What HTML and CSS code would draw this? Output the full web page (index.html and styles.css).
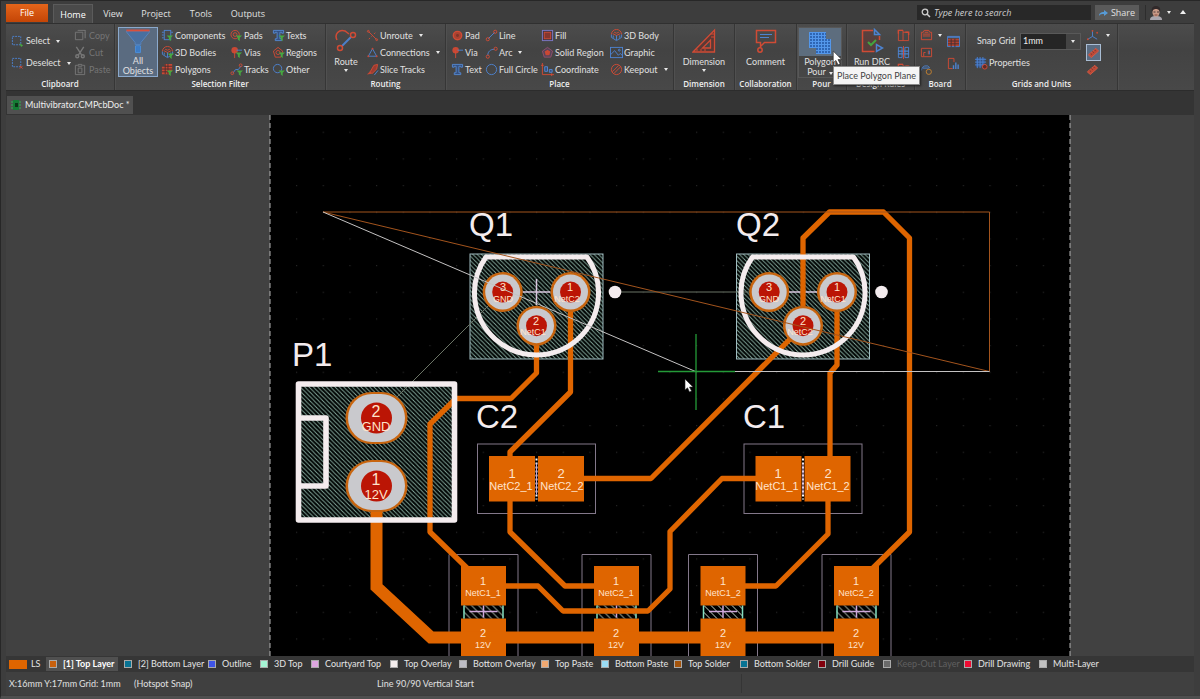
FILE: index.html
```html
<!DOCTYPE html>
<html lang="en">
<head>
<meta charset="utf-8">
<title>Multivibrator.CMPcbDoc</title>
<link rel="stylesheet" href="styles.css">
</head>
<body>
<svg class="sprite" aria-hidden="true">
  <symbol id="select" viewBox="0 0 14 14"><rect x="1.500" y="1.500" width="9" height="9" class="b" stroke-dasharray="2 1"/><path d="M9 9l4 2-2 2z" class="gf"/></symbol>
  <symbol id="deselect" viewBox="0 0 14 14"><rect x="1.500" y="1.500" width="9" height="9" class="b" stroke-dasharray="2 1"/><path d="M9.500 9.500l3 3m0-3l-3 3" class="r"/></symbol>
  <symbol id="copy" viewBox="0 0 14 14"><path d="M1.500 3.500h8v8h-8zM4 1.500h8v8" class="k"/><path d="M12 1v9" class="k" stroke-dasharray="1 1"/></symbol>
  <symbol id="cut" viewBox="0 0 14 14"><path d="M2.500 1l6 9M10.500 1l-6 9" class="k2"/><circle cx="3.500" cy="11" r="1.600" class="k2"/><circle cx="9.500" cy="11" r="1.600" class="k2"/></symbol>
  <symbol id="paste" viewBox="0 0 14 14"><path d="M4 2.500H1.500v10h10v-10H9M4.500 1.500h4v2h-4zM4.500 5.500h4v5h-4z" class="k"/></symbol>
  <symbol id="funnel" viewBox="0 0 7 7"><path d="M0 1h7L4.500 3.500V7L2.500 5.500v-2z" class="gf"/></symbol>
  <symbol id="comp" viewBox="0 0 14 14"><rect x="3.500" y="1.500" width="7" height="10" class="b"/><path d="M1 3.500h2M1 6.500h2M1 9.500h2M11 3.500h2" class="b"/><use href="#funnel" x="6" y="6" width="7" height="7"/></symbol>
  <symbol id="body" viewBox="0 0 14 14"><path d="M1.500 6a5.500 5.500 0 0 1 11 0M3 5l4 2 4-2M4.500 3.500L7 4.500l2.500-1" class="r"/><path d="M1.500 6v3L7 12.500 12.500 9V6M7 7v5M3.500 7v2.500M10.500 7v2.500" class="b"/></symbol>
  <symbol id="bodyf" viewBox="0 0 14 14"><use href="#body"/><use href="#funnel" x="7" y="7" width="7" height="7"/></symbol>
  <symbol id="poly" viewBox="0 0 14 14"><path d="M4 1h8v8H9v3H1V4h3z" class="rf"/><path d="M1 6.500h11M1 9.500h11M4.500 1v11M7.500 1v11M4 3.500h8" class="dk"/><use href="#funnel" x="6" y="7" width="7" height="7"/></symbol>
  <symbol id="pad" viewBox="0 0 14 14"><circle cx="7" cy="7" r="4.500" fill="#a94231" stroke="#d04b35" stroke-width="1.500"/><circle cx="7" cy="7" r="1.600" fill="#7f3429"/></symbol>
  <symbol id="padf" viewBox="0 0 14 14"><circle cx="5.500" cy="6" r="4.500" class="r"/><circle cx="5.500" cy="6" r="2" class="r"/><use href="#funnel" x="6" y="6" width="7" height="7"/></symbol>
  <symbol id="via" viewBox="0 0 14 14"><circle cx="5" cy="4.500" r="3.500" class="rf"/><path d="M5 5v8" class="r"/><path d="M7 4.500h6" class="b"/></symbol>
  <symbol id="viaf" viewBox="0 0 14 14"><use href="#via"/><use href="#funnel" x="6" y="6" width="7" height="7"/></symbol>
  <symbol id="text" viewBox="0 0 14 14"><path d="M1.500 1.500h11v3h-2v-1h-2v7h2v2h-7v-2h2v-7h-2v1h-2z" fill="#355181" stroke="#5488d2"/></symbol>
  <symbol id="textf" viewBox="0 0 14 14"><use href="#text"/><use href="#funnel" x="7" y="6" width="7" height="7"/></symbol>
  <symbol id="region" viewBox="0 0 14 14"><path d="M7 1.500l5.500 4-2 6.500h-7l-2-6.500z" fill="#55435a" stroke="#94506a"/><path d="M7 4l3 2-1 4H5L4 6z" class="rf"/></symbol>
  <symbol id="regionf" viewBox="0 0 14 14"><path d="M6.500 1.500l5 4-2 6.500h-6l-2-6.500z" class="r"/><circle cx="6.500" cy="7" r="2.200" class="r"/><use href="#funnel" x="7" y="6" width="7" height="7"/></symbol>
  <symbol id="line" viewBox="0 0 14 14"><path d="M3.500 10.500l7-7" class="b"/><circle cx="3" cy="11" r="1.700" class="r"/><circle cx="11" cy="3" r="1.700" class="r"/></symbol>
  <symbol id="trackf" viewBox="0 0 14 14"><path d="M3 11l3-4h3l3-4" class="b"/><circle cx="2.500" cy="11" r="1.500" class="r"/><circle cx="11.500" cy="2.500" r="1.500" class="r"/><use href="#funnel" x="7" y="7" width="7" height="7"/></symbol>
  <symbol id="circle" viewBox="0 0 14 14"><circle cx="7" cy="7" r="5.500" class="b"/></symbol>
  <symbol id="circlef" viewBox="0 0 14 14"><circle cx="6" cy="6" r="4.500" class="b"/><use href="#funnel" x="7" y="7" width="7" height="7"/></symbol>
  <symbol id="unroute" viewBox="0 0 14 14"><path d="M3 3l8 8" class="r"/><path d="M3 11l8-8" class="r" stroke-dasharray="2 2"/><circle cx="2.500" cy="2.500" r="1" class="r"/><circle cx="11.500" cy="11.500" r="1" class="r"/></symbol>
  <symbol id="conn" viewBox="0 0 14 14"><path d="M7 3l4.500 8h-9z" class="b"/><circle cx="7" cy="3" r="1" class="rf"/><circle cx="2.500" cy="11" r="1" class="rf"/><circle cx="11.500" cy="11" r="1" class="rf"/></symbol>
  <symbol id="slice" viewBox="0 0 14 14"><path d="M1 12.500l5-1L4.500 9z" class="rf"/><path d="M4.500 9.500l4-7 4-1-1 5-5 5z" fill="#9d3b30" stroke="#d04b35"/><path d="M9 13l4-5" class="b"/></symbol>
  <symbol id="arc" viewBox="0 0 14 14"><path d="M3 10c0-4 3-6.500 7-6.500" class="b"/><circle cx="3" cy="11.500" r="1.700" class="r"/><circle cx="11.500" cy="3" r="1.700" class="r"/></symbol>
  <symbol id="fill" viewBox="0 0 14 14"><rect x="1.500" y="1.500" width="11" height="11" fill="#3b3546" stroke="#7d78c6"/><rect x="3.500" y="3.500" width="7" height="7" fill="#85362f" stroke="#d04b35"/></symbol>
  <symbol id="coord" viewBox="0 0 14 14"><path d="M1.500 0v12.500H14M0 2.500h3M11.500 11v3" class="r"/><path d="M4 4h3v5H4zM9 7h3v3H9z" fill="#355181" stroke="#5488d2"/></symbol>
  <symbol id="graphic" viewBox="0 0 14 14"><rect x=".5" y="1.500" width="13" height="11" class="b"/><path d="M1 9l4-4 4 5 2-2 3 3" class="b"/><circle cx="10" cy="4.500" r="1" class="b"/></symbol>
  <symbol id="keep" viewBox="0 0 14 14"><circle cx="7" cy="7" r="5.500" class="r"/><path d="M2.500 9.500l7-7M4 11.500l7.500-7.500" class="r"/></symbol>
  <symbol id="rule1" viewBox="0 0 14 14"><path d="M1.500 1.500h5v11h-5zM6.500 3.500h6v9h-6" class="r"/><path d="M1.500 5v-3.500h5M9 3.500h3.500v3" class="r2"/></symbol>
  <symbol id="rule2" viewBox="0 0 14 14"><path d="M1.500 1.500h4v11h-4zM8.500 1.500h4v11h-4z" class="b"/><path d="M1 5.500h12M1 8.500h12" class="b2"/><path d="M7 0v14" class="r"/></symbol>
  <symbol id="board1" viewBox="0 0 14 14"><path d="M1.500 11.500v-8h2l1-2h5l1 2h2v8z" class="r"/><path d="M3 5.500h8M3 7.500h8M5 3.500h4" class="r"/></symbol>
  <symbol id="board2" viewBox="0 0 14 14"><path d="M1.500 2.500h11v9h-11zM4 11V7h2M9 5v4" class="r"/><path d="M10 5v4" class="b"/></symbol>
  <symbol id="board3" viewBox="0 0 14 14"><path d="M1.500 8a5 5 0 0 1 9-3M3 5.500h7" class="b"/><circle cx="9.500" cy="9.500" r="2.800" fill="none" stroke="#c28130"/></symbol>
  <symbol id="table" viewBox="0 0 14 14"><path d="M1 4h12v8H1z" fill="#b04331"/><path d="M.5 1.500h13v11H.5zM1 2.500h12" class="b"/><path d="M1 6.500h12M1 9.500h12M4.500 4v9M8.500 4v9" class="dk"/></symbol>
  <symbol id="chart" viewBox="0 0 14 14"><path d="M6 12.500H1.500v-11h6v4" class="r"/><path d="M7 13V9M9.500 13V6M12 13V8" class="b2"/></symbol>
  <symbol id="gridp" viewBox="0 0 14 14"><path d="M1 1h10v10H1z" fill="#355181"/><path d="M0 2.500h12M0 5.500h12M0 8.500h12M2.500 0v12M5.500 0v12M8.500 0v12" class="b"/><circle cx="10.500" cy="10.500" r="2.500" fill="#5d2b26" stroke="#d04b35"/></symbol>
  <symbol id="axes" viewBox="0 0 14 14"><path d="M7 2v6l-5 3M7 8l5 3" class="b"/><circle cx="7" cy="2" r="1" class="rf"/><circle cx="2" cy="11" r="1" class="rf"/><circle cx="12" cy="4" r="1" class="rf"/></symbol>
  <symbol id="ruler" viewBox="0 0 14 14"><path d="M1.500 9.500l8-7 3 3-8 7z" fill="#bd4836" stroke="#d65b43"/><path d="M4 8l1 1M6 6l1 1M8 4l1 1" class="dk"/></symbol>
  <symbol id="cursor" viewBox="0 0 10 15"><path d="M1 1v11l2.500-2.200L5.500 14l2-1-2-4H9z" fill="#fff" stroke="#222" stroke-width=".6"/></symbol>
</svg>

<div class="app">
  <header class="titlebar">
    <nav class="tabs" aria-label="Ribbon tabs">
      <button class="file">File</button>
      <button class="tab tab-on">Home</button>
      <button class="tab tab-view">View</button>
      <button class="tab tab-project">Project</button>
      <button class="tab tab-tools">Tools</button>
      <button class="tab tab-outputs">Outputs</button>
    </nav>
    <label class="search">
      <svg viewBox="0 0 10 10" width="10" height="10" aria-hidden="true"><circle cx="4" cy="4" r="2.800" fill="none" stroke="#ccc" stroke-width="1.300"/><path d="M6 6l3 3" stroke="#ccc" stroke-width="1.500"/></svg>
      <input type="search" placeholder="Type here to search" aria-label="Search">
    </label>
    <button class="share"><svg viewBox="0 0 9 8" width="9" height="8" aria-hidden="true"><path d="M0 7c0-3 2-4 5-4V1l4 3-4 3V5C3 5 1 5 0 7z" fill="#579bd6"/></svg>Share</button>
    <button class="account" aria-label="Account">
      <svg viewBox="0 0 12 14" width="12" height="14" aria-hidden="true"><path d="M0 14c0-3 2-4 6-4s6 1 6 4z" fill="#a9a6ae"/><ellipse cx="6" cy="6" rx="3.600" ry="4.800" fill="#c99a87"/><path d="M2 6C1 2 3 0 6 0s5 2 4 6C9 3 7 3 6 3S3 3 2 6z" fill="#30292a"/><path d="M3.500 6h2M7 6h2" stroke="#4c3b3b"/><path d="M4.500 9h3" stroke="#86483f"/></svg>
      <span class="caret"></span>
    </button>
    <button class="collapse" aria-label="Collapse ribbon"><span class="caret-up"></span></button>
  </header>

  <div class="ribbon">
    <section class="group g-clip">
      <div class="content">
        <div class="pair">
          <button class="item"><svg><use href="#select"/></svg>Select<span class="caret"></span></button>
          <button class="item"><svg><use href="#deselect"/></svg>Deselect<span class="caret"></span></button>
        </div>
        <div class="rows">
          <button class="item" disabled><svg><use href="#copy"/></svg>Copy</button>
          <button class="item" disabled><svg><use href="#cut"/></svg>Cut</button>
          <button class="item" disabled><svg><use href="#paste"/></svg>Paste</button>
        </div>
      </div>
      <h2>Clipboard</h2>
    </section>
    <section class="group g-filter">
      <div class="content">
        <button class="big all">
          <svg viewBox="0 0 26 27" width="26" height="27"><path d="M1 2h24v1L16 14v2h-6v-2L1 3z" fill="#496f9f" stroke="#5583bd"/><path d="M1 1.500h24" stroke="#d7503c" stroke-width="2"/><path d="M10.500 17.500h5v7h-5zM12 18v6M14 18v6" fill="#2e66ae" stroke="#4c91dd"/></svg>
          <span>All<br>Objects</span>
        </button>
        <div class="rows filter-cols">
          <button class="item"><svg><use href="#comp"/></svg>Components</button>
          <button class="item"><svg><use href="#bodyf"/></svg>3D Bodies</button>
          <button class="item"><svg><use href="#poly"/></svg>Polygons</button>
          <button class="item"><svg><use href="#padf"/></svg>Pads</button>
          <button class="item"><svg><use href="#viaf"/></svg>Vias</button>
          <button class="item"><svg><use href="#trackf"/></svg>Tracks</button>
          <button class="item"><svg><use href="#textf"/></svg>Texts</button>
          <button class="item"><svg><use href="#regionf"/></svg>Regions</button>
          <button class="item"><svg><use href="#circlef"/></svg>Other</button>
        </div>
      </div>
      <h2>Selection Filter</h2>
    </section>
    <section class="group g-route">
      <div class="content">
        <button class="big route">
          <svg viewBox="0 0 24 25" width="24" height="25"><path d="M8 18l9-9" stroke="#4c7fca" stroke-width="2"/><path d="M3 12C0 6 5 1 11 3l4 3" class="r2"/><circle cx="6" cy="20" r="2.500" class="r2"/><circle cx="19" cy="7" r="2.500" class="r2"/></svg>
          <span>Route</span><span class="caret"></span>
        </button>
        <div class="rows">
          <button class="item"><svg><use href="#unroute"/></svg>Unroute<span class="caret"></span></button>
          <button class="item"><svg><use href="#conn"/></svg>Connections<span class="caret"></span></button>
          <button class="item"><svg><use href="#slice"/></svg>Slice Tracks</button>
        </div>
      </div>
      <h2>Routing</h2>
    </section>
    <section class="group g-place">
      <div class="content">
        <div class="rows place-cols">
          <button class="item"><svg><use href="#pad"/></svg>Pad</button>
          <button class="item"><svg><use href="#via"/></svg>Via</button>
          <button class="item"><svg><use href="#text"/></svg>Text</button>
          <button class="item"><svg><use href="#line"/></svg>Line</button>
          <button class="item"><svg><use href="#arc"/></svg>Arc<span class="caret"></span></button>
          <button class="item"><svg><use href="#circle"/></svg>Full Circle</button>
          <button class="item"><svg><use href="#fill"/></svg>Fill</button>
          <button class="item"><svg><use href="#region"/></svg>Solid Region</button>
          <button class="item"><svg><use href="#coord"/></svg>Coordinate</button>
          <button class="item"><svg><use href="#body"/></svg>3D Body</button>
          <button class="item"><svg><use href="#graphic"/></svg>Graphic</button>
          <button class="item"><svg><use href="#keep"/></svg>Keepout<span class="caret"></span></button>
        </div>
      </div>
      <h2>Place</h2>
    </section>
    <section class="group g-dim">
      <div class="content">
        <button class="big">
          <svg viewBox="0 0 24 25" width="24" height="25"><path d="M22.500 2v22H1zM18.500 12v8h-8z" fill="#5b3935" stroke="#d04b35" stroke-width="1.300" fill-rule="evenodd"/><path d="M19 6h3M19 9h3M5 21v2M9 21v2M13 21v2" class="r"/></svg>
          <span>Dimension</span><span class="caret"></span>
        </button>
      </div>
      <h2>Dimension</h2>
    </section>
    <section class="group g-collab">
      <div class="content">
        <button class="big">
          <svg viewBox="0 0 24 25" width="24" height="25"><path d="M2.500 2.500h19v12h-11l-4 4v-4h-4z" class="r2"/><path d="M6 6.500h12M6 9.500h9" class="b"/><circle cx="6" cy="22" r="2.200" class="r2"/></svg>
          <span>Comment</span>
        </button>
      </div>
      <h2>Collaboration</h2>
    </section>
    <section class="group g-pour">
      <div class="content">
        <button class="big pour">
          <span class="pour-icon"><svg viewBox="0 0 24 25" width="24" height="25"><path d="M1 2h17v7h5v15H8v-7H1z" fill="#2f66b4"/><path d="M1 2.500h17M1 5.500h17M1 8.500h17M1 11.500h22M1 14.500h22M1 17.500h22M8 20.500h15M8 23.500h15M1.500 2v16M4.500 2v16M7.500 2v16M10.500 2v22M13.500 2v22M16.500 2v22M19.500 9v15M22.500 9v15" stroke="#5397eb" stroke-width="1" fill="none"/></svg></span>
          <span>Polygon<br>Pour <i class="caret"></i></span>
        </button>
        <svg class="pointer" width="11" height="16"><use href="#cursor"/></svg>
        <div class="tooltip" role="tooltip">Place Polygon Plane</div>
      </div>
      <h2>Pour</h2>
    </section>
    <section class="group g-rules">
      <div class="content">
        <button class="big drc">
          <svg viewBox="0 0 24 25" width="24" height="25"><path d="M3 3h10v5h6v15H3z" fill="#693833" opacity=".5"/><path d="M13 2.500H2.500v21h12M19.500 12V8" class="r2"/><path d="M14.500 1.500v5h5zM16.500 16.500v7l6-3.500z" class="b2"/><path d="M8 14l3 3 5-5" fill="none" stroke="#44a43e" stroke-width="2"/></svg>
          <span>Run DRC</span>
        </button>
        <div class="rows">
          <button class="item" aria-label="Rules"><svg><use href="#rule1"/></svg></button>
          <button class="item" aria-label="Constraints"><svg><use href="#rule2"/></svg></button>
          <button class="item" aria-label="Rule wizard"><svg><use href="#rule1"/></svg></button>
        </div>
      </div>
      <h2>Design Rules</h2>
    </section>
    <section class="group g-board">
      <div class="content">
        <div class="rows">
          <button class="item" aria-label="Board shape"><svg><use href="#board1"/></svg><span class="caret"></span></button>
          <button class="item" aria-label="Layer stack"><svg><use href="#board2"/></svg></button>
          <button class="item" aria-label="Board settings"><svg><use href="#board3"/></svg></button>
        </div>
        <div class="pair">
          <button class="item" aria-label="Drill table"><svg><use href="#table"/></svg></button>
          <button class="item" aria-label="Report"><svg><use href="#chart"/></svg></button>
        </div>
      </div>
      <h2>Board</h2>
    </section>
    <section class="group g-grids">
      <div class="content">
        <div class="pair">
          <div class="snap"><label for="snap">Snap Grid</label><span class="combo"><select id="snap"><option>1mm</option></select><span class="caret"></span></span></div>
          <button class="item"><svg><use href="#gridp"/></svg>Properties</button>
        </div>
        <div class="rows">
          <button class="item" aria-label="Origin"><svg><use href="#axes"/></svg><span class="caret"></span></button>
          <button class="item unit-on" aria-label="Metric"><svg><use href="#ruler"/></svg></button>
          <button class="item" aria-label="Imperial"><svg><use href="#ruler"/></svg></button>
        </div>
      </div>
      <h2>Grids and Units</h2>
    </section>
  </div>

  <div class="docbar">
    <button class="doc"><svg viewBox="0 0 10 10" width="10" height="10" aria-hidden="true"><path d="M2 0h6v10H2z" fill="#167b35"/><path d="M0 2h2M0 5h2M0 8h2M8 2h2M8 5h2M8 8h2" stroke="#2db653"/><path d="M4 3h3v4H4z" fill="#0b3518"/></svg>Multivibrator.CMPcbDoc *</button>
  </div>

  <main class="canvas">
    <svg class="board" viewBox="6 115 1188 541" preserveAspectRatio="xMinYMin slice" role="img" aria-label="Circuit board layout">
      <defs>
        <pattern id="dots" x="296" y="185" width="26.670" height="26.670" patternUnits="userSpaceOnUse"><rect width="1.200" height="1.200" fill="#242424"/></pattern>
        <pattern id="hatch" width="4.330" height="4.330" patternUnits="userSpaceOnUse"><rect width="4.330" height="4.330" fill="#010504"/><path d="M-1-1l6.500 6.500M-1 3.330l2 2M3.330-1l2 2" stroke="#86aa9d" stroke-width=".9"/></pattern>
        <pattern id="hatch2" width="7" height="7" patternUnits="userSpaceOnUse"><path d="M-1-1l9 9M-1 6l2 2M6-1l2 2" stroke="#c8d8c8" stroke-width="1"/></pattern>
        <g id="q">
          <rect x="-66.500" y="-38" width="133" height="105" fill="url(#hatch)" stroke="#9fbcc0"/>
          <path d="M-14 0h28M0-13v26" stroke="#d9c8e0" stroke-width="1.500"/>
        </g>
        <path id="can" d="M-50.500-35h101A62 62 0 1 1-50.500-35z" fill="none" stroke="#f4ecee" stroke-width="5" stroke-linejoin="round"/>
        <g id="rpad"><circle r="20" fill="#c8650f"/><circle r="17.500" fill="#c9c9cd"/><circle r="10.500" fill="#bb1505"/></g>
        <g id="opad"><rect x="-31" y="-26" width="62" height="52" rx="26" fill="#c8650f"/><rect x="-28.500" y="-24" width="57" height="48" rx="24" fill="#c9c9cd"/><circle r="15.500" fill="#bb1505"/></g>
        <g id="cap"><rect x="-59" y="-34.500" width="118" height="69.500" fill="none" stroke="#83788a"/><path d="M-47.500-22.500h46v45.500h-46zM1.500-22.500h46v45.500h-46z" fill="#df6500"/><path d="M0-20v41" stroke="#fff" stroke-width="2" stroke-dasharray="2 2"/><path d="M0-15v31" stroke="#caa3cf"/></g>
        <g id="res"><path d="M-34.500 102V0h69v102" fill="none" stroke="#83788a"/><path d="M-22.500 11.500h45v39.500h-45zM-22.500 64h45v40h-45z" fill="#df6500"/><rect x="-20" y="51" width="40" height="13" fill="url(#hatch2)"/><path d="M-19.500 51v13M19.500 51v13" stroke="#83dec0" stroke-width="1.500"/><path d="M-14 57h28M0 51v12" stroke="#cfa8dc" stroke-width="1.500"/></g>
      </defs>
      <rect x="270" y="115" width="800" height="541" fill="#000"/>
      <rect x="272" y="125" width="796" height="531" fill="url(#dots)"/>
      <path d="M270 115v541M1070 115v541" stroke="#b4b4b4" stroke-dasharray="5 3"/>
      <use href="#q" x="536.500" y="292"/><use href="#q" x="803" y="292"/>
      <rect x="298" y="384" width="156" height="136" fill="url(#hatch)"/>
      <use href="#cap" x="536.500" y="478.500"/><use href="#cap" x="803" y="478.500"/>
      <use href="#res" x="483.500" y="554.500"/><use href="#res" x="616.500" y="554.500"/><use href="#res" x="723" y="554.500"/><use href="#res" x="856.500" y="554.500"/>
      <path d="M376 418L502 292M615 292h154" stroke="#6b7466" fill="none"/>
      <g fill="none" stroke="#df6500" stroke-width="5.300" stroke-linejoin="round">
        <path d="M536.500 326v47L511 398.500h-55L430 424v108l38 37"/>
        <path d="M570.500 292v100L510 452v6M510 500v32l55 54h31"/>
        <path d="M583 478.500h68L803 326v-88l26.500-26h54l26 26v294L873 568"/>
        <path d="M837 292v73l-7 8v85M828 500v34l-52 52h-31"/>
        <path d="M757 478.500h-35l-52 53V589l-22 22h-85l-25-25h-33"/>
        <path d="M376.500 505v82l54.500 50.500h404" stroke-width="12" stroke-linejoin="miter"/>
      </g>
      <g fill="none" stroke="#f4ecee" stroke-width="5.600" stroke-linejoin="round"><rect x="298.500" y="384" width="156" height="136"/><path d="M301 418h25v68h-25"/></g>
      <use href="#can" x="536.500" y="292"/><use href="#can" x="803" y="292"/>
      <use href="#rpad" x="502.700" y="292"/><use href="#rpad" x="570.500" y="292"/><use href="#rpad" x="536.500" y="325.700"/>
      <use href="#rpad" x="769.200" y="292"/><use href="#rpad" x="837" y="292"/><use href="#rpad" x="803" y="325.700"/>
      <use href="#opad" x="376.500" y="418"/><use href="#opad" x="376.500" y="486"/>
      <circle cx="615" cy="292" r="6.300" fill="#f4ecee"/><circle cx="881.500" cy="292" r="6.300" fill="#f4ecee"/>
      <path d="M323 212h666.500v159.500z" fill="none" stroke="#a3541d"/>
      <path d="M323 212l372.500 159.500h294" fill="none" stroke="#c4c2c2"/>
      <path d="M658 371.500h77M696 334v76" stroke="#249a38" stroke-width="1.300"/>
      <g class="designator"><text x="469" y="236">Q1</text><text x="736" y="236">Q2</text><text x="292" y="366">P1</text><text x="476" y="428">C2</text><text x="743" y="428">C1</text></g>
      <g class="net name-s"><text x="503" y="302">GND</text><text x="567" y="302">NetC2</text><text x="533" y="335">NetC1</text><text x="769" y="302">GND</text><text x="833" y="302">NetC1</text><text x="800" y="335">NetC2</text></g>
      <g class="net num-s"><text x="503" y="291">3</text><text x="570" y="291">1</text><text x="536" y="325">2</text><text x="769" y="291">3</text><text x="837" y="291">1</text><text x="803" y="325">2</text></g>
      <g class="net num-l"><text x="376" y="417">2</text><text x="376" y="485">1</text></g>
      <g class="net name-l"><text x="376" y="431">GND</text><text x="376" y="499">12V</text></g>
      <g class="net num-m"><text x="512" y="478">1</text><text x="561" y="478">2</text><text x="778" y="478">1</text><text x="828" y="478">2</text></g>
      <g class="net name-m"><text x="511" y="490">NetC2_1</text><text x="562" y="490">NetC2_2</text><text x="777" y="490">NetC1_1</text><text x="828" y="490">NetC1_2</text></g>
      <g class="net num-s"><text x="483" y="585">1</text><text x="483" y="637">2</text><text x="616" y="585">1</text><text x="616" y="637">2</text><text x="723" y="585">1</text><text x="723" y="637">2</text><text x="856" y="585">1</text><text x="856" y="637">2</text></g>
      <g class="net name-s"><text x="483" y="596">NetC1_1</text><text x="483" y="648">12V</text><text x="616" y="596">NetC2_1</text><text x="616" y="648">12V</text><text x="723" y="596">NetC1_2</text><text x="723" y="648">12V</text><text x="856" y="596">NetC2_2</text><text x="856" y="648">12V</text></g>
      <use href="#cursor" x="684" y="378" width="10" height="15"/>
    </svg>
  </main>

  <div class="layers" role="tablist" aria-label="Layers">
    <button class="layer ls"><i class="c-ls"></i>LS</button>
    <button class="layer layer-on"><i class="c-top"></i>[1] Top Layer</button>
    <button class="layer"><i class="c-bottom"></i>[2] Bottom Layer</button>
    <button class="layer"><i class="c-outline"></i>Outline</button>
    <button class="layer"><i class="c-3d"></i>3D Top</button>
    <button class="layer"><i class="c-court"></i>Courtyard Top</button>
    <button class="layer"><i class="c-tover"></i>Top Overlay</button>
    <button class="layer"><i class="c-bover"></i>Bottom Overlay</button>
    <button class="layer"><i class="c-tpaste"></i>Top Paste</button>
    <button class="layer"><i class="c-bpaste"></i>Bottom Paste</button>
    <button class="layer"><i class="c-tsolder"></i>Top Solder</button>
    <button class="layer"><i class="c-bottom"></i>Bottom Solder</button>
    <button class="layer"><i class="c-guide"></i>Drill Guide</button>
    <button class="layer" disabled><i class="c-keep"></i>Keep-Out Layer</button>
    <button class="layer"><i class="c-drill"></i>Drill Drawing</button>
    <button class="layer"><i class="c-multi"></i>Multi-Layer</button>
  </div>
  <footer class="status"><span>X:16mm Y:17mm</span><span>Grid: 1mm</span><span>(Hotspot Snap)</span><span>Line 90/90 Vertical Start</span></footer>
</div>
</body>
</html>
```
FILE: styles.css
```css
* { box-sizing: border-box; }
body {
  margin: 0;
  background: #4a4a4a;
  color: #e0e0e0;
  font: 9px/12px Lato, "Open Sans", sans-serif;
}
button, input, select { font: inherit; color: inherit; border: 0; margin: 0; padding: 0; background: none; }
.sprite { display: none; }
.r, .b, .k { fill: none; stroke-width: 1; }
.r2, .b2, .k2 { fill: none; stroke-width: 1.5; }
.r, .r2 { stroke: #d04b35; }
.b, .b2 { stroke: #4d83d0; }
.k, .k2 { stroke: #777; }
.dk { fill: none; stroke: #4a3030; }
.rf { fill: #c94834; }
.gf { fill: #46a840; }

.app {
  display: flex;
  flex-direction: column;
  height: 100vh;
  padding: 3px 6px 1px 5px;
  background: #3d3d3d;
  border-top: 1px solid #272727;
  border-left: 1px solid #272727;
  border-bottom: 3px solid #4f4f4f;
}
.titlebar { display: flex; height: 19px; align-items: stretch; font-family: "Open Sans", "Noto Sans", sans-serif; }
.tabs { display: flex; flex: 1; align-items: stretch; }
.file { width: 42px; background: linear-gradient(#e4651b, #c44506); color: #fff; margin-right: 5px; height: 18px; }
.tab { width: 40px; padding-top: 1px; }
.tab-on { background: #4a4a4a; color: #fff; border: 1px solid #5b5b5b; border-bottom: 0; }
.tab-project { width: 46px; }
.tab-tools { width: 44px; }
.tab-outputs { width: 50px; }
.search { display: flex; align-items: center; gap: 3px; width: 174px; height: 15px; margin: 1px 4px 0 0; padding-left: 4px; background: #282828; }
.search input { flex: 1; min-width: 0; outline: 0; font-style: italic; }
.search input::placeholder { color: #d0d0d0; opacity: 1; }
.share { display: flex; align-items: center; justify-content: center; gap: 3px; width: 44px; height: 15px; margin-top: 1px; background: #5a5a5a; }
.account { display: flex; align-items: center; gap: 5px; margin: 1px 0 0 6px; padding-left: 4px; height: 15px; border-left: 1px solid #2d2d2d; }
.collapse { width: 23px; height: 16px; display: flex; align-items: center; justify-content: center; }
.caret { display: inline-block; flex: none; border: 2px solid transparent; border-top: 3px solid #e8e8e8; border-bottom: 0; }
.caret-up { border: 3px solid transparent; border-bottom: 4px solid #f0f0f0; border-top: 0; }

.ribbon { display: flex; height: 68px; background: linear-gradient(#4c4c4c, #434343 40%, #484848); border-top: 1px solid #303030; border-bottom: 1px solid #2c2c2c; }
.group { flex: none; display: flex; flex-direction: column; border-right: 1px solid #363636; box-shadow: 1px 0 #505050; }
.content { display: flex; position: relative; height: 54px; padding-top: 3px; }
.group h2 { margin: 0; font: 600 8px/12px "Open Sans", "Noto Sans", sans-serif; text-align: center; color: #eee; white-space: nowrap; }
.g-clip { width: 109px; }
.g-filter { width: 211px; }
.g-route { width: 120px; }
.g-place { width: 228px; }
.g-dim { width: 61px; }
.g-collab { width: 62px; }
.g-pour { width: 50px; }
.g-rules { width: 68px; }
.g-board { width: 51px; }
.g-grids { width: 152px; }
.rows { display: grid; grid-template-rows: repeat(3, 17px); grid-auto-flow: column; align-content: start; }
.pair { display: grid; grid-template-rows: repeat(2, 22px); padding-top: 3px; align-content: start; }
.item { display: flex; align-items: center; white-space: nowrap; }
.item svg { width: 13px; height: 13px; margin-right: 1px; flex: none; }
.item .caret { margin-left: 6px; }
.item:disabled { color: #757575; }
.g-clip .pair { width: 63px; padding-left: 5px; }
.g-clip .item svg { margin-right: 2px; }
.g-clip .rows { margin-left: 5px; }
.big { display: flex; flex-direction: column; align-items: center; justify-content: start; line-height: 10px; white-space: nowrap; }
.big > svg { margin-top: 1px; margin-bottom: 4px; }
.big .caret { margin-top: 2px; }
.all { width: 40px; height: 50px; margin: 0 3px; background: #5a6b80; border: 1px solid #8ba9cc; }
.all > svg { margin: 1px 0; }
.filter-cols { grid-template-columns: 69px 42px 44px; }
.route { width: 40px; }
.place-cols { grid-template-columns: 34px 56px 69px 60px; padding-left: 5px; }
.g-dim .big, .g-collab .big { flex: 1; }
.pour { width: 44px; height: 51px; margin: 0 0 0 1px; border: 1px solid #575757; }
.pour-icon { display: flex; justify-content: center; align-self: stretch; height: 29px; margin-bottom: 1px; padding-top: 2px; background: #5d6d7e; }
.pour i { margin: 0 0 1px 1px; vertical-align: middle; }
.pointer { position: absolute; left: 35px; top: 26px; z-index: 3; }
.tooltip { position: absolute; left: 36px; top: 42px; z-index: 2; padding: 2px 3px; background: #f5f5f5; color: #444; border: 1px solid #888; line-height: 13px; white-space: nowrap; box-shadow: 1px 1px 2px #222; }
.drc { width: 50px; }
.g-board .rows { padding-left: 5px; width: 32px; }
.g-board .rows .caret { margin-left: 4px; }
.g-grids .pair { width: 115px; padding-left: 9px; }
.g-grids .rows { padding-left: 5px; }
.snap { display: flex; align-items: center; justify-content: space-between; padding-left: 2px; }
.combo { display: flex; align-items: center; justify-content: end; position: relative; width: 61px; height: 17px; border: 1px solid #595959; background: linear-gradient(to left, #444 14px, #252525 14px); color: #eee; }
.combo select { position: absolute; inset: 0; width: 100%; padding-left: 2px; appearance: none; }
.combo .caret { margin-right: 5px; }
.unit-on { width: 15px; justify-content: center; border: 1px solid #a9bdd4; background: #5a6b80; }
.unit-on svg { margin: 0; }

.docbar { display: flex; align-items: end; height: 24px; padding: 0 1px 1px; background: #343434; }
.doc { display: flex; align-items: center; gap: 4px; height: 18px; padding: 0 3px 0 4px; background: #505050; color: #eee; white-space: nowrap; }
.canvas { flex: 1; min-height: 0; background: #414141; }
.board { display: block; width: 100%; height: 100%; }
.designator { font: 33px "Liberation Sans", sans-serif; fill: #f4ecee; }
.net { font-family: "Liberation Sans", sans-serif; fill: #ffe3cb; text-anchor: middle; }
.name-s { font-size: 9px; }
.num-s { font-size: 11px; }
.name-m { font-size: 11px; }
.num-m { font-size: 13px; }
.name-l { font-size: 13px; }
.num-l { font-size: 16px; }

.layers { display: grid; grid-template-columns: 40px 75px 84px 52px 51px 79px 69px 82px 60px 73px 66px 78px 65px 81px 75px 63px; height: 16px; padding: 1px 0; background: #363636; }
.layer { display: flex; align-items: center; gap: 6px; padding-left: 3px; white-space: nowrap; color: #e4e4e4; }
.layer i { width: 8px; height: 8px; flex: none; border: 1px solid #aaa; }
.layer-on { background: #505050; font-weight: 700; color: #fff; width: 72px; }
.layer.ls { gap: 4px; }
.layer .c-ls { width: 18px; height: 9px; background: #df6500; border: 0; }
.layer:disabled { color: #606060; }
.c-top { background: #c8600d; }
.c-bottom { background: #087394; }
.c-outline { background: #3f55e8; }
.c-3d { background: #a5f5d5; }
.c-court { background: #dda6e0; }
.c-tover { background: #f5eeee; }
.c-bover { background: #bdbdc5; }
.c-tpaste { background: #f0a871; }
.c-bpaste { background: #9adcf5; }
.c-tsolder { background: #a4540c; }
.c-guide { background: #82000d; }
.c-keep { background: #6a6a6a; }
.c-drill { background: #ee0b32; }
.c-multi { background: #c0c0c0; }
.status { display: grid; grid-template-columns: 70px 55px 243px 365px auto; align-items: center; height: 23px; padding-left: 3px; background: #404040; }
.status span:last-child { border-right: 1px solid #353535; line-height: 19px; }
```
